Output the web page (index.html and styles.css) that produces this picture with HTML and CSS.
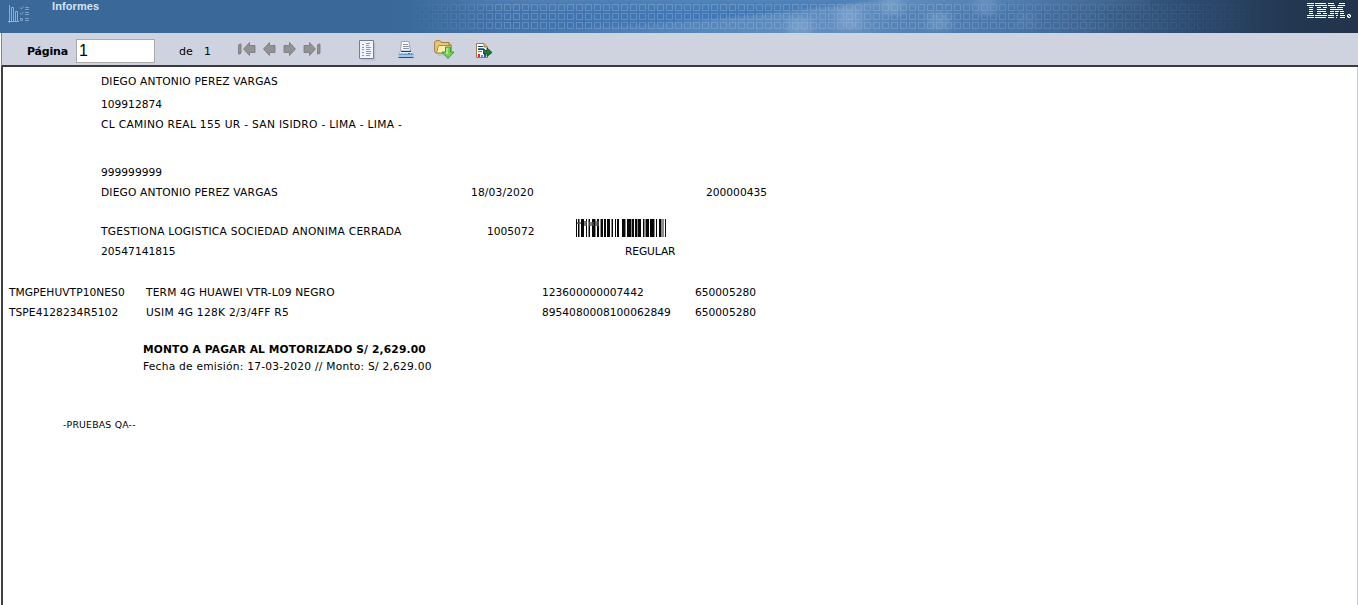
FILE: index.html
```
<!DOCTYPE html>
<html lang="es">
<head>
<meta charset="utf-8">
<title>Informes</title>
<link rel="stylesheet" href="styles.css">
</head>
<body>
<header class="banner">
  <svg class="banner-art" width="1358" height="33" viewBox="0 0 1358 33" aria-hidden="true">
    <defs>
      <linearGradient id="base" gradientUnits="userSpaceOnUse" x1="0" y1="0" x2="1358" y2="0">
        <stop offset="0" stop-color="#396899"/><stop offset=".29" stop-color="#396899"/>
        <stop offset=".37" stop-color="#4272aa"/><stop offset=".5" stop-color="#4178b5"/>
        <stop offset=".64" stop-color="#4578b2"/><stop offset=".74" stop-color="#4272a8"/>
        <stop offset=".8" stop-color="#3d6490"/><stop offset=".88" stop-color="#2c4a6f"/>
        <stop offset=".95" stop-color="#233750"/><stop offset="1" stop-color="#22344c"/>
      </linearGradient>
      <linearGradient id="fade" gradientUnits="userSpaceOnUse" x1="405" y1="0" x2="1270" y2="0">
        <stop offset="0" stop-color="#fff" stop-opacity="0"/><stop offset=".12" stop-color="#fff"/>
        <stop offset=".6" stop-color="#fff"/><stop offset="1" stop-color="#fff" stop-opacity="0"/>
      </linearGradient>
      <linearGradient id="beam" gradientUnits="userSpaceOnUse" x1="500" y1="0" x2="1130" y2="0">
        <stop offset="0" stop-color="#a9c4e0" stop-opacity="0"/><stop offset=".4" stop-color="#a9c4e0" stop-opacity=".25"/>
        <stop offset=".57" stop-color="#a9c4e0" stop-opacity=".3"/><stop offset=".62" stop-color="#a9c4e0" stop-opacity=".16"/><stop offset="1" stop-color="#a9c4e0" stop-opacity="0"/>
      </linearGradient>
      <linearGradient id="shine" x1="0" y1="0" x2="0" y2="1">
        <stop offset="0" stop-color="#7fa6d2" stop-opacity=".25"/><stop offset=".4" stop-color="#7fa6d2" stop-opacity="0"/>
      </linearGradient>
      <pattern id="tiles" width="9" height="9" patternUnits="userSpaceOnUse" y="4">
        <path d="M.5 .5H6.500V6.500H.5Z" fill="none" stroke="#a5c3e4" stroke-width="1" opacity=".32"/>
      </pattern>
      <mask id="tileMask"><rect x="400" width="900" height="33" fill="url(#fade)"/></mask>
      <filter id="soft" x="-30%" y="-30%" width="160%" height="160%"><feGaussianBlur stdDeviation="4 2.500"/></filter>
      <filter id="edge"><feGaussianBlur stdDeviation="1.500"/></filter>
    </defs>
    <rect width="1358" height="33" fill="url(#base)"/>
    <g mask="url(#tileMask)">
      <rect x="400" width="750" height="33" fill="url(#shine)"/>
      <path d="M500 31C640 27 750 18 890 -1H1130V40H500Z" fill="url(#beam)" filter="url(#edge)"/>
      <g fill="#b8cde5" opacity=".25" filter="url(#soft)">
        <rect x="788" y="18" width="24" height="18"/><rect x="838" y="8" width="22" height="21"/>
        <rect x="882" y="-3" width="20" height="18"/><rect x="928" y="12" width="22" height="18"/>
        <rect x="976" y="-3" width="20" height="18"/><rect x="1018" y="12" width="18" height="16" opacity=".5"/>
      </g>
      <rect x="405" y="4" width="845" height="25" fill="url(#tiles)"/>
    </g>
  </svg>
  <svg class="app-mark" width="23" height="19" viewBox="0 0 23 19" fill="none" stroke="#9fc1e3" stroke-width="1" aria-hidden="true">
    <path d="M0 17.500H11M1.500 1V19M3.500 17V3.500H5.500V17M7.500 17V7.500H9.500V17" opacity=".8"/>
    <path d="M17 3.500H21M17 5.500H21M17 8.500H21M17 10.500H21M17 14.500H21M17 16.500H21M12 3.500L13.500 5L15.500 2.500M12 9L13.500 10.500L15.500 8M12.500 14.500H14.500V16.500H12.500Z" opacity=".65"/>
  </svg>
  <h1 class="banner-title">Informes</h1>
  <svg class="ibm" width="45" height="16" viewBox="0 0 45 16" fill="none" stroke="#fff" stroke-width="1" role="img" aria-label="IBM">
    <path d="M0 .5H7M8 .5H19M21 .5H27M32 .5H38M0 2.500H7M8 2.500H20M21 2.500H28M31 2.500H38M2 4.500H6M10 4.500H14M16 4.500H20M23 4.500H29M30 4.500H36M2 6.500H6M10 6.500H19M23 6.500H36M2 8.500H6M10 8.500H19M23 8.500H27M28 8.500H32M33 8.500H37M2 10.500H6M10 10.500H14M16 10.500H20M23 10.500H27M28 10.500H31M33 10.500H37M0 12.500H7M8 12.500H20M21 12.500H27M29 12.500H31M33 12.500H38M0 14.500H7M8 14.500H19M21 14.500H27M29 14.500H30M33 14.500H38" shape-rendering="crispEdges"/>
    <circle cx="42" cy="13" r="1.600"/><path d="M41 14L43 12" stroke-width=".8"/>
  </svg>
</header>
<nav class="toolbar">
  <label class="page-label" for="page">Página</label>
  <input class="page-input" id="page" value="1">
  <span class="page-of">de</span><span class="page-total">1</span>
  <svg class="arrows" width="84" height="16" viewBox="0 0 84 16" fill="#929293" stroke="#77777a" stroke-width=".8" aria-hidden="true">
    <path d="M.5 4.500L1.500 3H3V12L2 13H.5ZM5.500 8L11.500 1.500V4.500H17V11.500H11.500V14.500ZM25.500 8L31.500 1.500V4.500H37V11.500H31.500V14.500ZM57.500 8L51.500 1.500V4.500H46V11.500H51.500V14.500ZM77.500 8L71.500 1.500V4.500H66V11.500H71.500V14.500ZM79.500 4L80.500 3H82V12L81 13H79.500Z"/>
  </svg>
  <svg class="tool toc" width="17" height="21" viewBox="0 0 17 21" aria-hidden="true">
    <path d="M2 2H16.500V20.500H2Z" fill="#bfc2cf"/><path d="M.5.5H14.500V18.500H.5Z" fill="#eef3fc" stroke="#777c94"/>
    <path d="M3 4.500H5M3 7.500H5M3 9.500H5M3 12.500H5M3 15.500H5M7 3.500H11M7 5.500H10M7 7.500H12M7 9.500H11M7 11.500H12M7 13.500H12M7 15.500H11" stroke="#8c96b2"/>
  </svg>
  <svg class="tool printer" width="17" height="18" viewBox="0 0 17 18" aria-hidden="true">
    <path d="M3.500 .5H11L12.500 10H2.500Z" fill="#fbfcff" stroke="#9ca4b6"/>
    <path d="M5 3.500H10M5 5.500H11M5 7.500H11" stroke="#8a95a9"/>
    <path d="M2 10H14L15.500 12V16H.5V12Z" fill="#a4c5e6"/><path d="M2 10.500H14L15 12H2Z" fill="#dceafa"/>
    <path d="M.5 13.500H15.500" stroke="#6d9fcb"/><path d="M.5 16.500H15.500" stroke="#30496d"/><path d="M3 10.500H13" stroke="#353f50"/>
    <path d="M10 12.500H12" stroke="#e33432"/><path d="M13 12.500H14" stroke="#35a442"/>
  </svg>
  <svg class="tool folder" width="22" height="20" viewBox="0 0 22 20" aria-hidden="true">
    <path d="M2 3L4 1H8L9 3H18V15L4 16Z" fill="#bdbdb9" opacity=".7"/>
    <path d="M.7 12V2L2 .7H6L7.500 2.500H15V5H17V13H2Z" fill="#e8c77a" stroke="#a87b2d"/>
    <path d="M2.500 13L4.500 5.500H17.500L16 13Z" fill="#fff0ae" stroke="#b48a3a"/>
    <path d="M11.500 7H16.500V12H20L14 18.500L8 12H11.500Z" fill="#79cf56" stroke="#3a9b45"/>
    <path d="M13 8V14" stroke="#baf09a" stroke-width="1.500"/>
  </svg>
  <svg class="tool export" width="17" height="17" viewBox="0 0 17 17" aria-hidden="true">
    <path d="M.5.5H8L11.500 4V14.500H.5Z" fill="#fff" stroke="#9c7945"/><path d="M8 .5V4H11.500" fill="#d9b973" stroke="#9c7945"/>
    <path d="M2 3.500H7M2 6.500H9" stroke="#213e5c"/><path d="M2 5.500H8M2 8.500H6" stroke="#4981b5"/>
    <path d="M2 11H4V14H2Z" fill="#e71856"/><path d="M5 12H7V14H5Z" fill="#29a4da"/><path d="M8 9H10V14H8Z" fill="#245aa2"/>
    <path d="M7.500 7.500H11V5L16 9.500L11 13.500V11H7.500Z" fill="#267b27" stroke="#143e1c" stroke-width=".8"/>
  </svg>
</nav>
<main class="report">
  <div class="row customer name"><span>DIEGO ANTONIO PEREZ VARGAS</span></div>
  <div class="row customer document"><span>109912874</span></div>
  <div class="row customer address"><span>CL CAMINO REAL 155 UR - SAN ISIDRO - LIMA - LIMA -</span></div>
  <div class="row customer phone"><span>999999999</span></div>
  <div class="row customer order"><span class="name">DIEGO ANTONIO PEREZ VARGAS</span><span class="date">18/03/2020</span><span>200000435</span></div>
  <div class="row customer carrier"><span class="company">TGESTIONA LOGISTICA SOCIEDAD ANONIMA CERRADA</span><span>1005072</span>
    <svg class="barcode" width="91" height="18" viewBox="0 0 91 18" shape-rendering="crispEdges" aria-hidden="true">
      <path d="M0 0H1V18H0ZM2 0H3V18H2ZM5 0H8V18H5ZM10 0H11V18H10ZM13 0H14V18H13ZM16 0H19V18H16ZM21 0H23V18H21ZM25 0H27V18H25ZM28 0H30V18H28ZM31 0H34V18H31ZM36 0H37V18H36ZM39 0H40V18H39ZM41 0H43V18H41ZM46 0H49V18H46ZM51 0H55V18H51ZM56 0H58V18H56ZM59 0H61V18H59ZM62 0H65V18H62ZM67 0H68V18H67ZM70 0H73V18H70ZM74 0H78V18H74ZM80 0H81V18H80ZM83 0H85V18H83ZM89 0H90V18H89Z" fill="#080808"/>
      <path d="M3 0H4V18H3ZM12 0H13V18H12ZM19 0H20V18H19ZM24 0H25V18H24ZM35 0H36V18H35ZM49 0H50V18H49ZM55 0H56V18H55ZM61 0H62V18H61ZM68 0H70V18H68ZM78 0H79V18H78ZM85 0H88V18H85Z" fill="#8c8c8c"/>
      <path d="M1 3H5V5H1ZM8 2H11V7H8ZM13 3H18V7H13ZM19 2H23V7H19Z" fill="#555" opacity=".75"/>
    </svg>
  </div>
  <div class="row customer tax"><span class="tax-id">20547141815</span><span class="regular">REGULAR</span></div>
  <div class="items">
    <span class="sku">TMGPEHUVTP10NES0</span><span class="product">TERM 4G HUAWEI VTR-L09 NEGRO</span><span>123600000007442</span><span>650005280</span>
    <span class="sku">TSPE4128234R5102</span><span class="product sim">USIM 4G 128K 2/3/4FF R5</span><span>8954080008100062849</span><span>650005280</span>
  </div>
  <div class="amount">MONTO A PAGAR AL MOTORIZADO S/ 2,629.00</div>
  <div class="issued">Fecha de emisión: 17-03-2020 // Monto: S/ 2,629.00</div>
  <div class="note">-PRUEBAS QA--</div>
</main>
</body>
</html>
```
FILE: styles.css
```
* { box-sizing: border-box; }
body { margin: 0; width: 1358px; height: 605px; overflow: hidden; display: flex; flex-direction: column; background: #fff; color: #000; font: 10.667px Verdana, "DejaVu Sans", sans-serif; }
svg { display: block; flex: none; }
.banner { position: relative; height: 33px; flex: none; display: flex; align-items: flex-start; background: #396899; }
.banner-art { position: absolute; inset: 0; }
.app-mark, .banner-title, .ibm { position: relative; }
.app-mark { margin: 4px 0 0 8px; }
.banner-title { margin: 0 0 0 21px; color: #d5e5f6; font: bold 11px/13px "Liberation Sans", Arial, sans-serif; letter-spacing: .1px; }
.ibm { margin: 3px 6px 0 auto; }
.toolbar { height: 34px; flex: none; display: flex; align-items: flex-start; padding-left: 25px; margin-left: 1px; border-left: 1px solid #85858b; border-bottom: 2px solid #3a3a3d; background: #cfd3df; font-size: 11px; }
.page-label { width: 49px; margin-top: 12px; line-height: 13px; font-weight: bold; letter-spacing: -.2px; }
.page-input { width: 79px; height: 24px; margin-top: 6px; padding: 0 2px 0; border: 1px solid #aaa; border-radius: 0; background: #fff; color: #000; font: 16px "Liberation Sans", Arial, sans-serif; }
.page-of { width: 25px; margin: 12px 0 0 24px; line-height: 13px; }
.page-total { width: 34px; margin-top: 12px; line-height: 13px; }
.arrows { margin-top: 8px; }
.toc { margin: 7px 0 0 37px; }
.printer { margin: 8px 0 0 22px; }
.folder { margin: 7px 0 0 19px; }
.export { margin: 10px 0 0 20px; }
.report { flex: 1; margin-left: 1px; padding: 5px 0 0 6px; border-left: 2px solid #414145; border-right: 1px solid #c9cbd2; white-space: nowrap; line-height: 20px; }
.row { display: flex; height: 20px; }
.customer { padding-left: 92px; }
.name { letter-spacing: .16px; }
.document { margin-top: 3px; }
.address { letter-spacing: .3px; }
.phone { margin-top: 28px; }
.order .name { width: 370px; }
.date { width: 235px; letter-spacing: .14px; }
.carrier { margin-top: 19px; }
.company { width: 386px; letter-spacing: .24px; }
.barcode { margin: -3px 0 0 42px; }
.tax-id { width: 524px; }
.regular { letter-spacing: -.1px; }
.items { display: grid; grid-template-columns: 137px 396px 153px auto; grid-auto-rows: 20px; margin-top: 21px; }
.sku { letter-spacing: .05px; }
.product { letter-spacing: .16px; }
.sim { letter-spacing: .27px; }
.amount, .issued { margin-left: 134px; line-height: 17px; }
.amount { margin-top: 18px; font-weight: bold; letter-spacing: .15px; }
.issued { letter-spacing: .23px; }
.note { margin: 40px 0 0 54px; font-size: 9.333px; letter-spacing: .2px; }
```
